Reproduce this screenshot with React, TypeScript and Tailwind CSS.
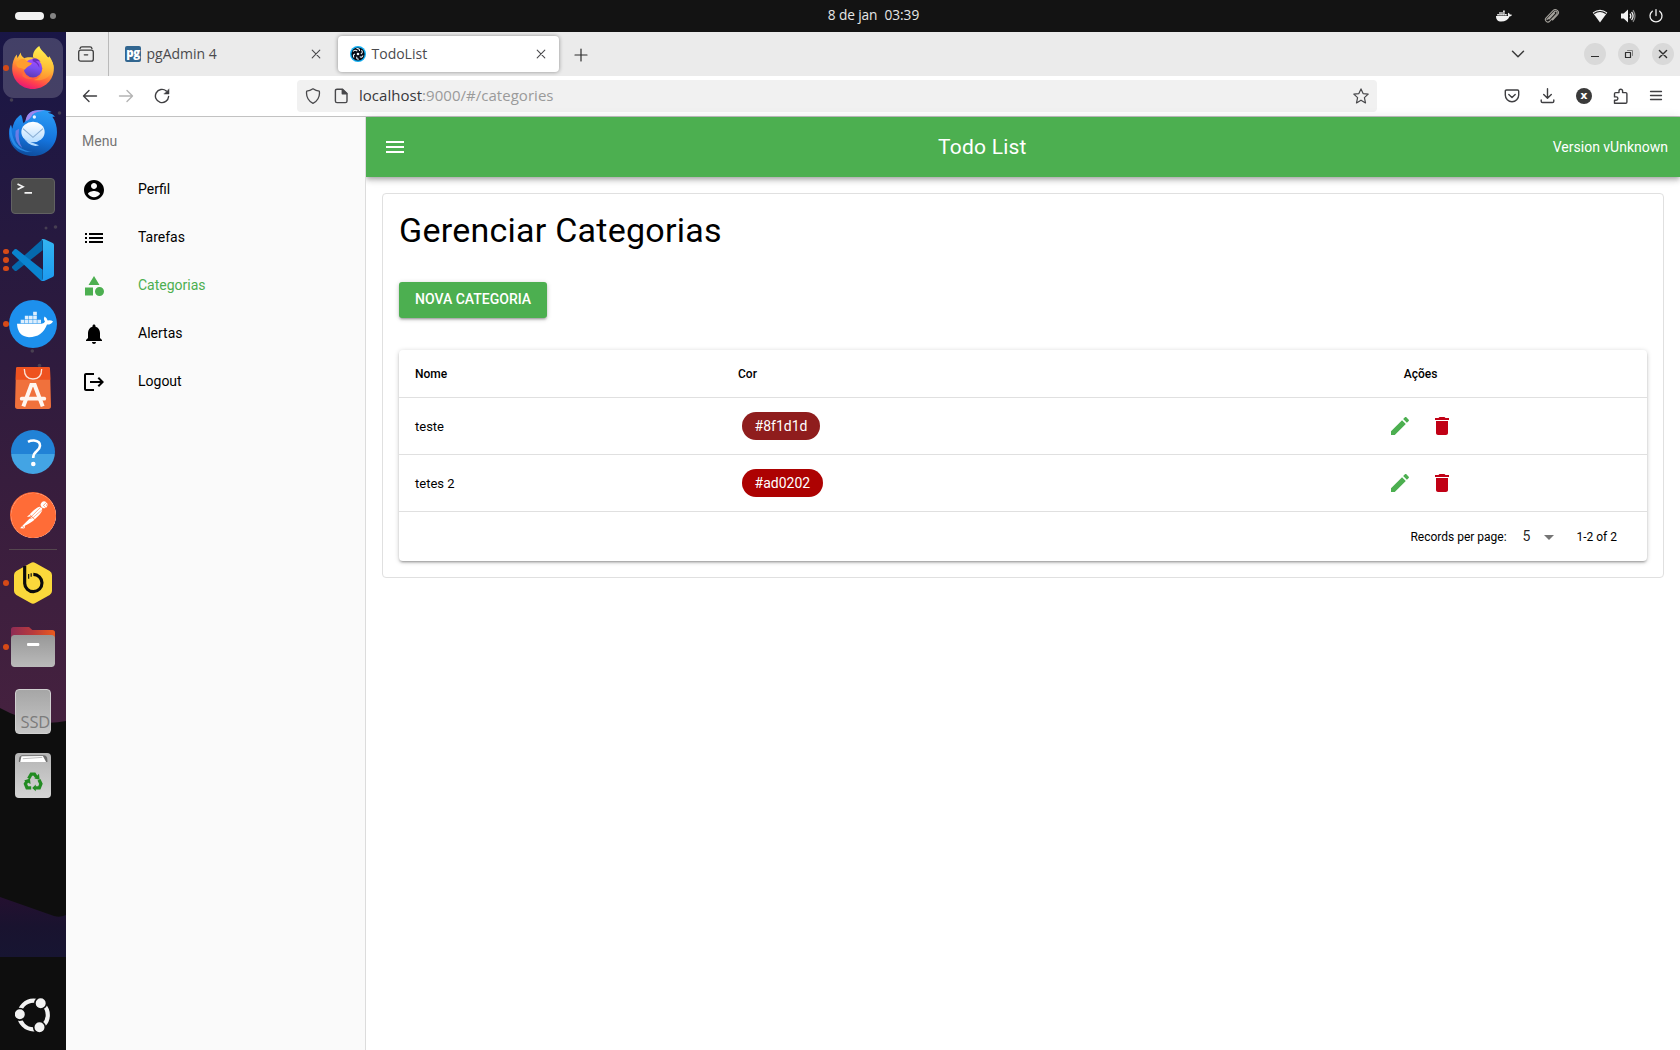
import React from "react";
import { FaDocker } from "react-icons/fa";
import { SiPostman } from "react-icons/si";

type IconProps = { className?: string };

const M = {
  account:
    "M12 2C6.48 2 2 6.48 2 12s4.48 10 10 10 10-4.48 10-10S17.52 2 12 2zm0 3c1.66 0 3 1.34 3 3s-1.34 3-3 3-3-1.34-3-3 1.34-3 3-3zm0 14.2c-2.5 0-4.71-1.28-6-3.22.03-1.99 4-3.08 6-3.08 1.99 0 5.97 1.09 6 3.08-1.29 1.94-3.5 3.22-6 3.22z",
  list: "M3 13h2v-2H3v2zm0 4h2v-2H3v2zm0-8h2V7H3v2zm4 4h14v-2H7v2zm0 4h14v-2H7v2zM7 7v2h14V7H7z",
  category: "M12 2l-5.5 9h11zM17.5 13a4.5 4.5 0 1 0 0 9 4.5 4.5 0 0 0 0-9zM3 13.5h8v8H3z",
  bell: "M12 22c1.1 0 2-.9 2-2h-4c0 1.1.89 2 2 2zm6-6v-5c0-3.07-1.64-5.64-4.5-6.32V4c0-.83-.67-1.5-1.5-1.5s-1.5.67-1.5 1.5v.68C7.63 5.36 6 7.92 6 11v5l-2 2v1h16v-1l-2-2z",
  logout:
    "M17 7l-1.41 1.41L18.17 11H8v2h10.17l-2.58 2.58L17 17l5-5zM4 5h8V3H4c-1.1 0-2 .9-2 2v14c0 1.1.9 2 2 2h8v-2H4V5z",
  menu: "M3 18h18v-2H3v2zm0-5h18v-2H3v2zm0-7v2h18V6H3z",
  edit: "M3 17.25V21h3.75L17.81 9.94l-3.75-3.75L3 17.25zM20.71 7.04c.39-.39.39-1.02 0-1.41l-2.34-2.34c-.39-.39-1.02-.39-1.41 0l-1.83 1.83 3.75 3.75 1.83-1.83z",
  trash: "M6 19c0 1.1.9 2 2 2h8c1.1 0 2-.9 2-2V7H6v12zM19 4h-3.5l-1-1h-5l-1 1H5v2h14V4z",
  drop: "M7 10l5 5 5-5z",
};

function Mat({ d, className = "" }: { d: string; className?: string }) {
  return (
    <svg viewBox="0 0 24 24" className={`size-6 shrink-0 fill-current ${className}`}>
      <path d={d} />
    </svg>
  );
}

/* 16px outline icons of the browser chrome */
function Line({ children, className = "", w = 1.2 }: { children: React.ReactNode; className?: string; w?: number }) {
  return (
    <svg
      viewBox="0 0 16 16"
      className={`size-4 shrink-0 ${className}`}
      fill="none"
      stroke="currentColor"
      strokeWidth={w}
      strokeLinecap="round"
      strokeLinejoin="round"
    >
      {children}
    </svg>
  );
}

const Close = ({ className = "" }: IconProps) => (
  <Line w={1.1} className={className}>
    <path d="M4.2 4.2l7.6 7.6M11.8 4.2l-7.6 7.6" />
  </Line>
);

function TopBar() {
  return (
    <div className="flex h-8 shrink-0 items-center bg-[#131313] text-[#f2f2f2]">
      <div className="flex w-[300px] items-center gap-[6px] pl-[15px]">
        <span className="h-2 w-[29px] rounded-full bg-[#f2f2f2]" />
        <span className="size-[6px] rounded-full bg-[#848484]" />
      </div>
      <div className="flex flex-1 justify-center gap-[7px] pr-[69px] pb-[2px] font-['Open_Sans',sans-serif] text-[13.7px] text-[#e6e6e6]">
        <span className="ml-[20px] tracking-[-0.1px]">8 de jan</span>
        <span>03:39</span>
      </div>
      <div className="flex items-center pr-4">
        <FaDocker className="mr-8 h-4 w-4" />
        <svg viewBox="0 0 16 16" className="mr-8 size-4" fill="none" stroke="#a5a29c" strokeWidth="1.1" strokeLinecap="round">
          <path d="M3 11.5l7.2-7.7a1.6 1.6 0 0 1 2.4 2.2l-6.8 7.2a2.5 2.5 0 0 1-3.7-3.4L9 2.7a3 3 0 0 1 4.6 4L8.5 12M5 11l5.6-6" />
        </svg>
        <svg viewBox="0 0 16 16" className="mr-3 size-4">
          <path d="M.7 4.6Q8-.9 15.3 4.6L8 14.4z" fill="#f2f2f2" />
          <path d="M2.1 5.4Q8 1.6 13.9 5.4" stroke="#131313" strokeWidth="1.2" fill="none" />
        </svg>
        <svg viewBox="0 0 16 16" className="mr-3 size-4">
          <path d="M1 5.4h2.7L8 1.6v12.8l-4.3-3.8H1z" fill="#f2f2f2" />
          <path d="M10 5.6q1.7 2.4 0 4.8M11.6 3.8q3 4.2 0 8.4" stroke="#f2f2f2" strokeWidth="1.3" fill="none" />
          <path d="M13 2.2q4 5.8 0 11.6" stroke="#8a8a8a" strokeWidth="1.2" fill="none" />
        </svg>
        <svg viewBox="0 0 16 16" className="size-4" fill="none" stroke="#f2f2f2" strokeWidth="1.3" strokeLinecap="round">
          <path d="M4.3 3.2a6 6 0 1 0 7.4 0M8 1.6v6" />
        </svg>
      </div>
    </div>
  );
}

function FirefoxLogo() {
  return (
    <svg viewBox="0 0 126 130" className="mb-[2px] h-[43px] w-[42px]">
      <defs>
        <linearGradient id="ffBody" x1="0.75" y1="0" x2="0.3" y2="1">
          <stop offset="0" stopColor="#fff44f" />
          <stop offset="0.3" stopColor="#ffc13a" />
          <stop offset="0.55" stopColor="#ff8034" />
          <stop offset="0.78" stopColor="#ff3f4e" />
          <stop offset="1" stopColor="#e3127c" />
        </linearGradient>
        <linearGradient id="ffGlobe" x1="0.6" y1="0" x2="0.4" y2="1">
          <stop offset="0" stopColor="#a84bff" />
          <stop offset="0.5" stopColor="#7a4df0" />
          <stop offset="1" stopColor="#5b3bb5" />
        </linearGradient>
        <linearGradient id="ffFlame" x1="0.5" y1="0" x2="0.4" y2="1">
          <stop offset="0" stopColor="#fff250" />
          <stop offset="0.6" stopColor="#ffc038" />
          <stop offset="1" stopColor="#ff8a30" />
        </linearGradient>
      </defs>
      <path
        d="M62 130C28 130 0 103 0 68C0 52 5 36 14 26L16 36L26 20C26 27 30 33 37 37C44 33 54 33 62 35L96 30L110 34C122 46 126 56 126 68C126 103 98 130 62 130Z"
        fill="url(#ffBody)"
      />
      <path
        d="M82 0C70 8 62 20 63 33C74 38 86 48 91 62C94 82 84 98 66 103C94 108 120 92 125 64C124 52 120 42 112 30L110 40C106 24 86 16 82 0Z"
        fill="url(#ffFlame)"
      />
      <circle cx="63" cy="67" r="28" fill="url(#ffGlobe)" />
      <path d="M62 38Q76 34 86 48Q78 44 72 46Q84 54 82 66Q76 50 62 46Z" fill="#6a2fc0" />
      <path
        d="M12 52Q24 36 38 40Q46 50 60 52Q58 58 48 62Q42 66 38 72Q30 66 20 66Q12 62 12 52Z"
        fill="#ff9d2e"
      />
      <path d="M36 78Q40 96 62 98Q46 104 32 92Q28 84 36 78Z" fill="#ff7139" opacity="0.7" />
    </svg>
  );
}

function ThunderbirdLogo() {
  return (
    <svg viewBox="0 0 144 138" className="mt-[2px] h-[46px] w-12">
      <defs>
        <linearGradient id="tbBody" x1="0.6" y1="0" x2="0.4" y2="1">
          <stop offset="0" stopColor="#2a9bf5" />
          <stop offset="0.6" stopColor="#1473dc" />
          <stop offset="1" stopColor="#0e4c9c" />
        </linearGradient>
        <linearGradient id="tbMail" x1="0" y1="0" x2="0" y2="1">
          <stop offset="0" stopColor="#ffffff" />
          <stop offset="1" stopColor="#b5dcff" />
        </linearGradient>
      </defs>
      <path
        d="M72 138C30 138 0 108 0 72C0 58 2 50 6 44L10 56C14 36 22 22 36 14C42 24 40 34 44 40C54 30 52 14 66 6C80-2 110-2 128 6L116 8C128 10 134 14 138 20L130 20C140 34 144 50 144 66C144 108 112 138 72 138Z"
        fill="url(#tbBody)"
      />
      <path d="M50 34C50 18 60 6 76 2Q92 0 108 2Q80 4 70 14Q64 28 50 34Z" fill="#9d86ee" />
      <path d="M6 44C8 94 26 120 72 126Q34 128 14 104Q0 84 2 58Z" fill="#2e93f0" opacity="0.8" />
      <path d="M20 62Q14 96 40 114Q26 94 30 56Z" fill="#7f7fe8" opacity="0.8" />
      <ellipse cx="72" cy="66" rx="35" ry="31" fill="url(#tbMail)" />
      <path d="M46 88Q66 98 90 106Q74 112 58 100Z" fill="#b5dcff" />
      <path d="M42 56L72 82L102 56" fill="none" stroke="#8aaed4" strokeWidth="3.5" />
      <circle cx="76" cy="21" r="5" fill="#eaf5ff" />
    </svg>
  );
}

function TerminalLogo() {
  return (
    <div className="h-9 w-11 rounded-[4px] border border-[#626262] bg-[#4b4b4b]">
      <svg viewBox="0 0 42 34" className="h-[34px] w-[42px]" fill="none" stroke="#f4f4f4" strokeWidth="1.7">
        <path d="M5.5 5l5.5 2.8-5.500 2.800M12.500 13.800h7.500" />
      </svg>
    </div>
  );
}

function CodeLogo() {
  return (
    <svg viewBox="0 0 126 126" className="size-[42px]">
      <defs>
        <linearGradient id="vsPanel" x1="0" y1="0" x2="0" y2="1">
          <stop offset="0" stopColor="#32b5f1" />
          <stop offset="1" stopColor="#1e9bf0" />
        </linearGradient>
      </defs>
      <path d="M92 0V34L14 95Q11 97 8 95L1 88Q-2 85 1 82Z" fill="#0569ad" />
      <path d="M92 126V92L14 31Q11 29 8 31L1 38Q-2 41 1 44L84 122Q88 127 96 126Z" fill="#0a84cf" />
      <path d="M92 0Q96 0 98 1L122 12Q126 14 126 18V108Q126 112 122 114L98 125Q94 127 88 125Q93 124 93 118V8Q93 2 88 1Z" fill="url(#vsPanel)" />
    </svg>
  );
}

function DockerLogo() {
  return (
    <div className="flex size-12 items-center justify-center rounded-full bg-[#1d90ed] pl-[3px]">
      <svg viewBox="0 0 108 80" className="h-[27px] w-9 fill-white">
        <path d="M0 38H74Q82 37 84 31Q78 24 83 16Q90 20 92 28Q100 26 108 30Q104 40 90 40Q76 78 36 78Q2 76 0 38Z" />
        <path d="M11 26h11v10H11zM23.500 26h11v10h-11zM36 26h11v10H36zM48.500 26h11v10h-11zM61 26h11v10H61zM23.500 14h11v10h-11zM36 14h11v10H36zM48.500 14h11v10h-11zM48.500 2h11v10h-11z" opacity="0.85" />
      </svg>
    </div>
  );
}

function SoftwareLogo() {
  return (
    <svg viewBox="0 0 108 126" className="h-[42px] w-9">
      <path d="M8 0H100Q105 0 105 6L108 118Q108 126 100 126H8Q0 126 0 118L3 6Q3 0 8 0Z" fill="#f0713c" />
      <path d="M8 0H100Q105 0 105 6L106 38H2L3 6Q3 0 8 0Z" fill="#ee5220" />
      <path d="M28 6Q28 36 54 36Q80 36 80 6" fill="none" stroke="#fbe3d8" strokeWidth="4" />
      <path d="M25 118L49 54H59L83 118" fill="none" stroke="#fff6f0" strokeWidth="12" />
      <path d="M20 95H88" stroke="#fff6f0" strokeWidth="11" strokeLinecap="round" />
    </svg>
  );
}

function HelpLogo() {
  return (
    <div className="size-11 overflow-hidden rounded-full bg-linear-to-b from-[#2182d6] from-55% to-[#43a4e4] to-55%">
      <svg viewBox="0 0 44 44" className="size-11" fill="none" stroke="#fff" strokeWidth="2.6">
        <path d="M17 11.800Q19.500 10.400 23 10.500Q29.200 11 29 15.800Q28.800 18.500 25.800 21Q22.200 23.800 22.200 28" />
        <circle cx="22.300" cy="34" r="2.300" fill="#fff" stroke="none" />
      </svg>
    </div>
  );
}

function BeeLogo() {
  return (
    <svg viewBox="0 0 114 126" className="h-[42px] w-[38px]">
      <path d="M50 3Q57-1 64 3L107 27Q114 31 114 39V87Q114 95 107 99L64 123Q57 127 50 123L7 99Q0 95 0 87V39Q0 31 7 27Z" fill="#fad83b" />
      <path d="M32 12V64A26 26 0 1 0 58 37" fill="none" stroke="#0b0b0b" strokeWidth="9.500" />
      <path d="M44 36v14M51.500 34v10" stroke="#0b0b0b" strokeWidth="3.500" />
    </svg>
  );
}

function FilesLogo() {
  return (
    <svg viewBox="0 0 132 120" className="h-10 w-11">
      <defs>
        <linearGradient id="folderBack" x1="0" y1="0" x2="1" y2="0">
          <stop offset="0" stopColor="#8e2c55" />
          <stop offset="0.5" stopColor="#b93a3c" />
          <stop offset="1" stopColor="#ea5a1e" />
        </linearGradient>
        <linearGradient id="folderFront" x1="0" y1="0" x2="0" y2="1">
          <stop offset="0" stopColor="#989898" />
          <stop offset="1" stopColor="#bababa" />
        </linearGradient>
      </defs>
      <path d="M8 0H54L64 9H124Q132 9 132 17V60H0V8Q0 0 8 0Z" fill="url(#folderBack)" />
      <rect x="0" y="24" width="132" height="96" rx="11" fill="url(#folderFront)" />
      <rect x="48" y="48" width="37" height="9" rx="3" fill="#fff" />
    </svg>
  );
}

function SsdLogo() {
  return (
    <div className="flex h-[45px] w-9 items-end justify-end overflow-hidden rounded-[4px] border border-[#d0d0d0] bg-linear-to-b from-[#a6a6a6] to-[#c6c6c6] font-['Open_Sans',sans-serif] text-[16.500px] leading-[22px] tracking-[-0.200px] text-[#7c7c7c]">
      SSD
    </div>
  );
}

function TrashLogo() {
  return (
    <svg viewBox="0 0 111 134" className="h-[45px] w-9" preserveAspectRatio="none">
      <defs>
        <linearGradient id="binBody" x1="0" y1="0" x2="0" y2="1">
          <stop offset="0" stopColor="#b4b4b4" />
          <stop offset="1" stopColor="#d4d4d4" />
        </linearGradient>
      </defs>
      <rect width="111" height="134" rx="12" fill="url(#binBody)" />
      <path d="M12 22Q12 7 24 7H88Q100 7 100 22V27H12Z" fill="#6d6d6d" />
      <path d="M20 10L86 9L96 27H16Z" fill="#fff" />
      <path d="M24 17L84 13" stroke="#999" strokeWidth="2" />
      <g fill="none" stroke="#228b22" strokeWidth="10">
        <path d="M42 76L50 63H60L66 72" />
        <path d="M74 80L80 92L75 104H62" />
        <path d="M50 104H37L32 92L38 82" />
      </g>
      <path d="M74 62L76 80L60 76ZM64 94V114L53 104ZM28 82L46 76L48 92Z" fill="#228b22" />
    </svg>
  );
}

function UbuntuLogo() {
  return (
    <svg viewBox="0 0 36 36" className="size-9">
      <circle cx="18.500" cy="18" r="14.300" fill="none" stroke="#f2f2f2" strokeWidth="4.200" />
      <g fill="#f2f2f2" stroke="#0e0e0e" strokeWidth="1.600">
        <circle cx="4.800" cy="17.300" r="5.800" />
        <circle cx="25.700" cy="6.200" r="5.800" />
        <circle cx="24.500" cy="30.300" r="5.800" />
      </g>
    </svg>
  );
}

function DockItem({ children, dots = 0, active = false }: { children: React.ReactNode; dots?: number; active?: boolean }) {
  return (
    <div className="relative flex h-16 w-[66px] shrink-0 items-center justify-center">
      {active && <div className="absolute inset-x-[3px] inset-y-[2px] rounded-[11px] bg-white/18" />}
      <div className="absolute top-0 left-[3px] flex h-16 flex-col justify-center gap-[3px]">
        {Array.from({ length: dots }, (_, i) => (
          <span key={i} className="size-[5.500px] rounded-full bg-[#d64a17]" />
        ))}
      </div>
      <div className="relative">{children}</div>
    </div>
  );
}

function Dock() {
  return (
    <div className="relative flex w-[66px] shrink-0 flex-col overflow-hidden bg-[#0e0e0e] pt-1">
      <svg viewBox="0 0 66 1018" className="absolute top-0 left-0 h-[1018px] w-[66px]">
        <defs>
          <linearGradient id="wall" x1="0" y1="0" x2="0" y2="1">
            <stop offset="0" stopColor="#191646" />
            <stop offset="0.300" stopColor="#26193f" />
            <stop offset="0.650" stopColor="#371d3d" />
            <stop offset="1" stopColor="#45213f" />
          </linearGradient>
          <linearGradient id="wallLow" x1="0" y1="0" x2="0" y2="1">
            <stop offset="0" stopColor="#241030" />
            <stop offset="0.500" stopColor="#19132f" />
            <stop offset="1" stopColor="#171532" />
          </linearGradient>
        </defs>
        <path d="M0 0H66V689Q52 692 40 690Q18 686 0 676Z" fill="url(#wall)" />
        <path d="M0 865L54 884Q60 886 66 883V925H0Z" fill="url(#wallLow)" />
        <g fill="#55505a" opacity="0.700">
          <circle cx="11.500" cy="68" r="1.800" />
          <circle cx="59.500" cy="81" r="1.800" />
          <circle cx="55.500" cy="195" r="1.800" />
          <circle cx="46" cy="196" r="1.500" />
          <circle cx="32.300" cy="319" r="1.800" />
          <circle cx="39.500" cy="333.500" r="1.800" />
        </g>
      </svg>
      <DockItem active dots={1}><FirefoxLogo /></DockItem>
      <DockItem><ThunderbirdLogo /></DockItem>
      <DockItem><TerminalLogo /></DockItem>
      <DockItem dots={3}><CodeLogo /></DockItem>
      <DockItem dots={1}><DockerLogo /></DockItem>
      <DockItem><SoftwareLogo /></DockItem>
      <DockItem><HelpLogo /></DockItem>
      <DockItem>
        <div className="mb-[2px] flex size-[46px] items-center justify-center rounded-full bg-[#ff6c37]">
          <div className="rounded-full bg-white">
            <SiPostman className="size-[45px] text-[#ff6c37]" />
          </div>
        </div>
      </DockItem>
      <div className="relative mx-auto mt-px mb-px h-px w-12 shrink-0 bg-[#55474f]" />
      <DockItem dots={1}><BeeLogo /></DockItem>
      <DockItem dots={1}><FilesLogo /></DockItem>
      <DockItem><SsdLogo /></DockItem>
      <DockItem><TrashLogo /></DockItem>
      <div className="relative mt-auto mb-[17px] ml-[15px]">
        <UbuntuLogo />
      </div>
    </div>
  );
}

function QuasarIcon() {
  return (
    <svg viewBox="0 0 16 16" className="size-4">
      <circle cx="8" cy="8" r="8" fill="#12aef2" />
      <circle cx="8" cy="8" r="6.600" fill="#050a14" />
      <g fill="none" stroke="#eef6fa" strokeWidth="1.100">
        <path d="M3 5.500Q5 3.200 7.200 5.200M6.500 2.500Q9.800 2.200 9.500 5M11.500 4Q13.400 6.500 10.800 8M13 9.500Q11.500 12.200 9.800 10.600M8.800 13.300Q5.800 13 7 10.800M4 11.500Q2.400 8.800 5 8" />
      </g>
      <circle cx="8" cy="8" r="1.300" fill="#eef6fa" />
    </svg>
  );
}

function TabStrip() {
  return (
    <div className="flex h-11 items-center bg-[#ebebeb] font-['Open_Sans',sans-serif] text-sm text-[#4a4a4d]">
      <div className="flex h-11 w-[43px] items-center border-r border-[#bababa] pl-3">
        <Line className="text-[#3c3c3c]" w={1.3}>
          <rect x="0.700" y="4.200" width="14.600" height="11" rx="2" />
          <path d="M2 2.600Q2.300 .8 4 .8H12Q13.700 .8 14 2.600M6.300 8.800h3.400" />
        </Line>
      </div>
      <div className="flex h-9 w-[229px] items-center pr-[13px] pl-4">
        <span className="flex size-4 items-center justify-center rounded-[2px] bg-[#326690] pb-[3px] font-['Open_Sans',sans-serif] text-[11.500px] leading-none font-extrabold tracking-[-0.500px] text-white">
          pg
        </span>
        <span className="ml-[5.500px] flex-1">pgAdmin 4</span>
        <Close className="mr-[1px]" />
      </div>
      <div className="flex h-9 w-[221px] items-center rounded bg-white pr-[10px] pl-3 shadow-[0_0_4px_rgba(0,0,0,0.4)]">
        <QuasarIcon />
        <span className="ml-[5.500px] flex-1">TodoList</span>
        <Close />
      </div>
      <Line className="mt-[1px] ml-[13.500px] text-[#2c2c2c]" w={1.2}>
        <path d="M8 2v12M2 8h12" />
      </Line>
      <Line className="ml-auto text-[#3a3a3a]" w={1.5}>
        <path d="M2.500 5.300L8 10.700l5.500-5.400" />
      </Line>
      <div className="ml-[58px] flex gap-3 pr-1.5 text-[#2e2e2e]">
        <span className="flex size-[22px] items-center justify-center rounded-full bg-[#d9d9d9]">
          <Line w={1}><path d="M4 10.500h8" strokeLinecap="butt" /></Line>
        </span>
        <span className="flex size-[22px] items-center justify-center rounded-full bg-[#d9d9d9]">
          <Line w={1}>
            <rect x="4.500" y="6.500" width="5" height="5" strokeWidth="1.200" />
            <path d="M6.500 4.500h5v5" stroke="#777" strokeWidth="0.900" />
          </Line>
        </span>
        <span className="flex size-[22px] items-center justify-center rounded-full bg-[#d9d9d9]">
          <Line w={1.4}><path d="M4.400 4.400l7.200 7.200M11.600 4.400l-7.200 7.200" /></Line>
        </span>
      </div>
    </div>
  );
}

function NavBar() {
  return (
    <div className="flex h-[41px] items-center border-b border-[#c2c2c2] bg-white pl-4 text-[#3f3f42]">
      <div className="flex gap-5">
        <Line w={1.4}><path d="M14.500 8H1.500M7 2.500L1.500 8L7 13.500" /></Line>
        <Line w={1.4} className="text-[#b4b4b4]"><path d="M1.500 8h13M9 2.500L14.500 8L9 13.500" /></Line>
        <Line w={1.4}>
          <path d="M14.600 8.500A6.600 6.600 0 1 1 12.300 3" />
          <path d="M15 1.200V6h-4.800z" fill="currentColor" strokeWidth="0.500" />
        </Line>
      </div>
      <div className="ml-[127px] flex h-8 w-[1080px] items-center rounded bg-[#f1f1f1] px-2 font-['Open_Sans',sans-serif] text-[15px] tracking-[0.03px] text-[#9a9a9a]">
        <Line w={1.3} className="text-[#48484b]"><path d="M8 .8Q11 3 14.300 3.200Q15 7 13 10.800Q11.300 13.900 8 15.300Q4.700 13.900 3 10.800Q1 7 1.700 3.200Q5 3 8 .8Z" /></Line>
        <Line w={1.4} className="ml-3 text-[#48484b]">
          <path d="M4 1.200h5.500L14 5.600V13Q14 14.600 12.400 14.600H4Q2.400 14.600 2.400 13V2.800Q2.400 1.200 4 1.200Z" />
          <path d="M9.300 1.500V5.800H13.700Z" fill="currentColor" />
        </Line>
        <span className="ml-2.5 flex-1 pb-px"><span className="text-[#38383b]">localhost</span>:9000/#/categories</span>
        <Line className="text-[#48484b]"><path d="M8 .9l2.100 4.700 5.100.5-3.800 3.500 1.100 5.300L8 12.200l-4.500 2.700 1.100-5.300L.8 6.100l5.100-.5z" /></Line>
      </div>
      <div className="ml-[127px] flex gap-5">
        <Line w={1.4}>
          <path d="M2.500 2h11q1.200 0 1.200 1.200V7a6.700 6.700 0 0 1-13.400 0V3.200Q1.300 2 2.500 2ZM4.800 6.500L8 9.500l3.200-3" />
        </Line>
        <Line w={1.4}><path d="M7.500 .8V10M3.700 6.500l3.800 3.700 3.800-3.700M1.200 12v1.200q0 1.300 1.300 1.300h10q1.300 0 1.300-1.300V12" /></Line>
        <span className="flex size-4 items-center justify-center rounded-full bg-[#3a3a3a] font-['Open_Sans',sans-serif] text-[9.500px] leading-none font-extrabold text-white">
          X
        </span>
        <Line w={1.400}>
          <path d="M2.500 15.200V12.300h1.700a1.700 1.700 0 0 0 0-3.400H2.500V5.800Q2.500 4.600 3.700 4.600H7V3a1.800 1.800 0 0 1 3.600 0V4.600h3.100Q14.900 4.600 14.900 5.800V14Q14.900 15.200 13.700 15.200Z" />
        </Line>
        <Line w={1.300}><path d="M2.500 3.500h11M2.500 7.500h11M2.500 11.500h11" /></Line>
      </div>
    </div>
  );
}

const links = [
  { label: "Perfil", d: M.account },
  { label: "Tarefas", d: M.list },
  { label: "Categorias", d: M.category, active: true },
  { label: "Alertas", d: M.bell },
  { label: "Logout", d: M.logout },
];

function Sidebar() {
  return (
    <aside className="relative z-10 w-[300px] shrink-0 border-r border-[#dcdcdc] bg-[#fafafa] text-sm text-black">
      <div className="flex h-12 items-center pl-4 text-[#757575]">Menu</div>
      {links.map((l) => (
        <div key={l.label} className={l.active ? "flex h-12 items-center pl-4 text-[#4caf50]" : "flex h-12 items-center pl-4"}>
          <Mat d={l.d} className="mt-[2px]" />
          <span className="ml-8">{l.label}</span>
        </div>
      ))}
    </aside>
  );
}

function Header() {
  return (
    <header className="flex h-[60px] items-center bg-[#4caf50] pr-3 pl-2 text-white shadow-[0_2px_4px_-1px_rgba(0,0,0,0.2),0_4px_5px_rgba(0,0,0,0.14),0_1px_10px_rgba(0,0,0,0.12)]">
      <div className="flex size-[42px] items-center justify-center">
        <Mat d={M.menu} />
      </div>
      <div className="flex-1 pt-[2px] pr-1 text-center text-[21px] tracking-[0.01em]">Todo List</div>
      <div className="text-sm">Version vUnknown</div>
    </header>
  );
}

const rows = [
  { name: "teste", color: "#8f1d1d" },
  { name: "tetes 2", color: "#ad0202" },
];

function CategoryTable() {
  return (
    <div className="mt-8 h-[211px] rounded bg-white text-[13px] shadow-[0_1px_5px_rgba(0,0,0,0.2),0_2px_2px_rgba(0,0,0,0.14),0_3px_1px_-2px_rgba(0,0,0,0.12)]">
      <div className="flex h-12 items-center border-b border-[#e0e0e0] text-xs font-medium">
        <div className="w-[323px] pl-4">Nome</div>
        <div className="w-[472px] pl-4">Cor</div>
        <div className="w-[453px] text-center">Ações</div>
      </div>
      {rows.map((r) => (
        <div key={r.name} className="flex h-[57px] items-center border-b border-[#e0e0e0]">
          <div className="w-[323px] pt-[2px] pl-4">{r.name}</div>
          <div className="w-[663px] pl-5">
            <span
              className="inline-flex h-7 items-center rounded-full px-[12.600px] align-middle text-sm text-white"
              style={{ backgroundColor: r.color }}
            >
              {r.color}
            </span>
          </div>
          <div className="flex gap-[18px] pl-[2.500px]">
            <Mat d={M.edit} className="text-[#4caf50]" />
            <Mat d={M.trash} className="text-[#c10015]" />
          </div>
        </div>
      ))}
      <div className="flex h-[49px] items-center justify-end pr-[30px] text-xs">
        <span>Records per page:</span>
        <span className="ml-4 pb-[2px] text-sm text-black/87">5</span>
        <Mat d={M.drop} className="ml-[6.500px] text-[#757575]" />
        <span className="ml-[15.500px]">1-2 of 2</span>
      </div>
    </div>
  );
}

export default function App() {
  return (
    <div className="flex h-[1050px] w-[1680px] flex-col overflow-hidden bg-white font-[Roboto,sans-serif]">
      <TopBar />
      <div className="flex min-h-0 flex-1">
        <Dock />
        <div className="flex min-w-0 flex-1 flex-col">
          <TabStrip />
          <NavBar />
          <div className="flex min-h-0 flex-1">
            <Sidebar />
            <main className="min-w-0 flex-1 text-black">
              <Header />
              <section className="m-4 h-[385px] rounded border border-[#e0e0e0] p-4">
                <h4 className="text-[34px] leading-10 tracking-[0.00735em]">Gerenciar Categorias</h4>
                <button className="mt-8 flex h-9 items-center rounded-[3px] bg-[#4caf50] px-4 pb-[2px] text-sm font-medium text-white shadow-[0_1px_5px_rgba(0,0,0,0.2),0_2px_2px_rgba(0,0,0,0.14),0_3px_1px_-2px_rgba(0,0,0,0.12)]">
                  NOVA CATEGORIA
                </button>
                <CategoryTable />
              </section>
            </main>
          </div>
        </div>
      </div>
    </div>
  );
}
